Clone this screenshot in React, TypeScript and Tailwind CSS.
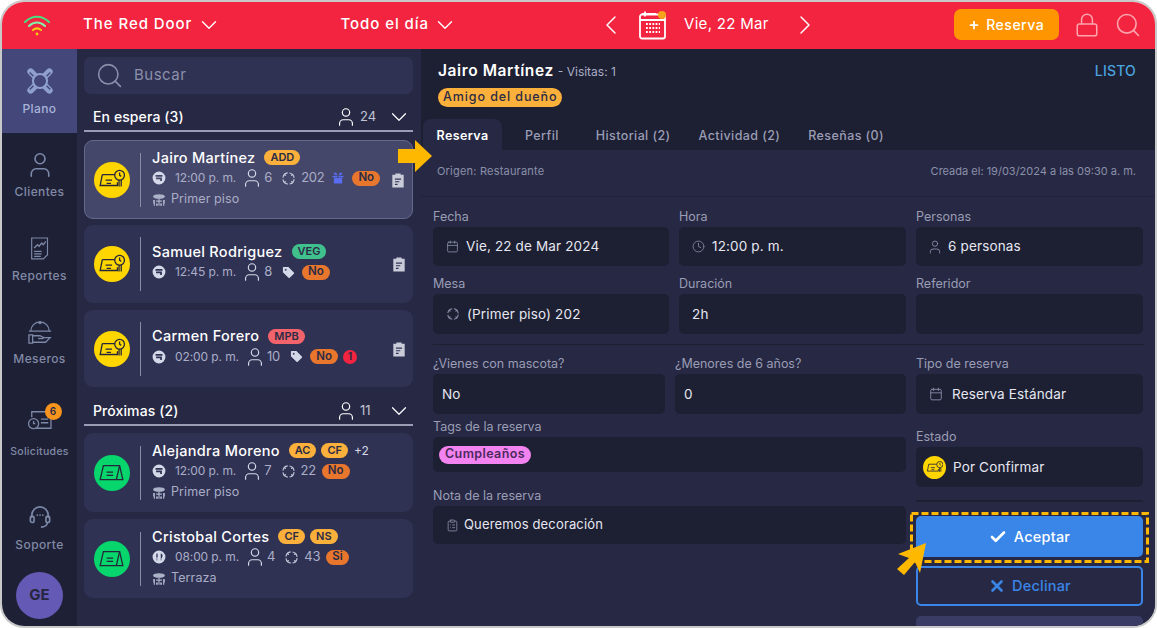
import { Calendar, Check, ChevronDown, ChevronLeft, ChevronRight, Clock, ClipboardList, Gift, Lock, Plus, Search, Tag, User, X } from "lucide-react";

const font = "font-['Inter','Liberation_Sans',sans-serif]";

function TableRound({ className = "w-5 h-5" }: { className?: string }) {
  return (
    <svg viewBox="0 0 24 24" className={className} fill="none" stroke="currentColor" strokeWidth="1.8">
      <circle cx="12" cy="12" r="9" strokeDasharray="11 3" strokeDashoffset="-1" />
      <path d="M5.500 5.500l1.500 1.500M18.500 5.500 17 7M5.500 18.500 7 17M18.500 18.500 17 17" strokeWidth="2" strokeLinecap="round" />
    </svg>
  );
}

function PlanoIcon() {
  return (
    <svg viewBox="0 0 32 32" className="w-[30px] h-[30px] text-[#8fa0d0]" fill="none" stroke="currentColor">
      <path d="M6 6l4.500 4.500M26 6l-4.500 4.500M6 26l4.500-4.500M26 26l-4.500-4.500" strokeWidth="7" strokeLinecap="round" />
      <path d="M5 7l4 4M27 7l-4 4M5 25l4-4M27 25l-4-4" strokeWidth="1.500" stroke="#44477a" />
      <circle cx="16" cy="16" r="7.500" fill="#44477a" strokeWidth="2.200" />
    </svg>
  );
}

function ReportIcon() {
  return (
    <svg viewBox="0 0 24 28" className="w-[20px] h-[24px] text-[#7c88a8]" fill="none" stroke="currentColor" strokeWidth="1.400">
      <path d="M2 2h19v20l-5 5H2z" />
      <path d="M5 14l4-4 2 2 3-4 2 2 3-4" strokeWidth="1.600" />
      <path d="M5 18h9M5 21h9M5 24h8" />
    </svg>
  );
}

function WaiterIcon() {
  return (
    <svg viewBox="0 0 28 26" className="w-[26px] h-[24px] text-[#7c88a8]" fill="none" stroke="currentColor" strokeWidth="1.400">
      <path d="M4 11a10 10 0 0 1 20 0M2 11h24" />
      <circle cx="14" cy="1.800" r="1" />
      <path d="M2 15h4v9H2zM6 16h8l4 2h7l-5 5H6" />
      <path d="M12 19h6" />
    </svg>
  );
}

function RequestIcon() {
  return (
    <svg viewBox="0 0 28 24" className="w-[26px] h-[22px] text-[#7c88a8]" fill="none" stroke="currentColor" strokeWidth="1.400">
      <path d="M5 9V3h21v18H10" />
      <circle cx="7" cy="16" r="5.500" />
      <path d="M7 13v3h2M15 11h8M15 15h8" />
    </svg>
  );
}

function HeadsetIcon() {
  return (
    <svg viewBox="0 0 24 26" className="w-[22px] h-[24px] text-[#7c88a8]" fill="none" stroke="currentColor" strokeWidth="1.800">
      <path d="M3 14v-3a9 9 0 0 1 18 0v3" />
      <rect x="1.500" y="12" width="4" height="7" rx="2" />
      <rect x="18.500" y="12" width="4" height="7" rx="2" />
      <path d="M20 19c0 3-3 5-7 5" />
      <path d="M9 11h.1M12 11h.1M15 11h.1" strokeLinecap="round" />
    </svg>
  );
}

function WifiIcon() {
  return (
    <svg viewBox="0 0 28 22" className="w-[28px] h-[22px]" fill="none" strokeLinecap="round" strokeWidth="2.200">
      <path d="M2 8c7-7 17-7 24 0" stroke="#4ade80" />
      <path d="M6 12c5-4.500 11-4.500 16 0" stroke="#86efac" />
      <path d="M10 16c2.500-2 5.500-2 8 0" stroke="#facc15" />
      <circle cx="14" cy="20" r="1.400" fill="#facc15" stroke="none" />
    </svg>
  );
}

function CalendarBadge() {
  return (
    <svg viewBox="0 0 30 30" className="w-[30px] h-[30px]" fill="none" stroke="#fff" strokeWidth="1.800">
      <rect x="2" y="4.500" width="25" height="24" rx="2" />
      <path d="M2 10h25M7 1.500v5M4 4h14" />
      <path d="M8 14h14M8 18h14M8 22h14" strokeDasharray="1.800 1.400" />
      <circle cx="24" cy="5" r="4" fill="#f7a21b" stroke="none" />
    </svg>
  );
}

function LayoutIcon() {
  return (
    <svg viewBox="0 0 24 24" className="w-[14px] h-[14px] text-[#d5d8e8] shrink-0" fill="currentColor">
      <path fillRule="evenodd" d="M12 1a11 11 0 1 0 0 22 11 11 0 0 0 0-22ZM6 7h12v3H6Zm1 4h10v6h-3v-3H7Z" />
    </svg>
  );
}

function DiningIcon() {
  return (
    <svg viewBox="0 0 24 24" className="w-[14px] h-[14px] text-[#d5d8e8] shrink-0" fill="currentColor">
      <path fillRule="evenodd" d="M12 1a11 11 0 1 0 0 22 11 11 0 0 0 0-22ZM7 6h1v4h1V6h1v5l-1 1v6H8v-6l-1-1Zm8 0c2 0 3 2 3 4s-1 4-2 4v4h-1Z" />
    </svg>
  );
}

function FloorIcon() {
  return (
    <svg viewBox="0 0 24 24" className="w-[14px] h-[14px] text-[#aab2c8] shrink-0" fill="currentColor">
      <ellipse cx="12" cy="6" rx="10" ry="4" />
      <path d="M11 9h2v13h-2zM2 12h3v10H3v-4H2zM19 12h3v6h-1v4h-2zM7 13h10v2H7zM7 18h3v4H7zM14 18h3v4h-3z" />
    </svg>
  );
}

function NoteIcon() {
  return (
    <svg viewBox="0 0 16 18" className="w-[14px] h-[16px] shrink-0">
      <path d="M5 1.500h6V3h3.500v14.500h-13V3H5z" fill="#c9ccd8" />
      <path d="M4.500 8h7M4.500 11h5M4.500 14h3" stroke="#303254" strokeWidth="1.300" />
    </svg>
  );
}

function StatusIcon({ waiting, className }: { waiting: boolean; className: string }) {
  return (
    <span className={`${className} rounded-full flex items-center justify-center shrink-0 ${waiting ? "bg-[#ffd600]" : "bg-[#06d66b]"}`}>
      <svg viewBox="0 0 26 20" className="w-[78%] h-[78%]" fill="none" stroke="#26263a" strokeWidth="1.200">
        {waiting ? (
          <>
            <path d="M4 6h13v3M4 6 2 16h16v-3" />
            <path d="M7 11h6M8 14h4" />
            <circle cx="20" cy="6.500" r="4.500" fill="#ffd600" />
            <path d="M20 4V6.500l1.500 1M19.500 11v6M21.500 11v6" />
          </>
        ) : (
          <>
            <path d="M5 4h15l3 13H2z" />
            <path d="M20 4l-3 13M8 10h6M8 13h6" />
          </>
        )}
      </svg>
    </span>
  );
}

type Pill = { label: string; color: string };

type Booking = {
  name: string;
  pills: Pill[];
  extra?: string;
  time: string;
  dining?: boolean;
  people: number;
  table?: string;
  gift?: boolean;
  tag?: boolean;
  answer: string;
  alert?: boolean;
  floor?: string;
  waiting: boolean;
  active?: boolean;
  note?: boolean;
  height: string;
};

const amber = "bg-[#fbb03b]";

const waitingList: Booking[] = [
  { name: "Jairo Martínez", pills: [{ label: "ADD", color: amber }], time: "12:00 p. m.", people: 6, table: "202", gift: true, answer: "No", floor: "Primer piso", waiting: true, active: true, note: true, height: "h-[79px]" },
  { name: "Samuel Rodriguez", pills: [{ label: "VEG", color: "bg-[#3fc08d]" }], time: "12:45 p. m.", people: 8, tag: true, answer: "No", waiting: true, note: true, height: "h-[78px]" },
  { name: "Carmen Forero", pills: [{ label: "MPB", color: "bg-[#f2636b]" }], time: "02:00 p. m.", people: 10, tag: true, answer: "No", alert: true, waiting: true, note: true, height: "h-[77px]" },
];

const upcoming: Booking[] = [
  { name: "Alejandra Moreno", pills: [{ label: "AC", color: amber }, { label: "CF", color: amber }], extra: "+2", time: "12:00 p. m.", people: 7, table: "22", answer: "No", floor: "Primer piso", waiting: false, height: "h-[79px]" },
  { name: "Cristobal Cortes", pills: [{ label: "CF", color: amber }, { label: "NS", color: amber }], time: "08:00 p. m.", dining: true, people: 4, table: "43", answer: "Si", floor: "Terraza", waiting: false, height: "h-[79px]" },
];

function BookingCard({ b }: { b: Booking }) {
  return (
    <div className={`${b.height} box-border rounded-[9px] flex items-center pr-[7px] ${b.active ? "pl-[9px] bg-[#45476a] border border-[#66698c]" : "pl-[10px] bg-[#303254]"}`}>
      <StatusIcon waiting={b.waiting} className="w-[36px] h-[36px]" />
      <div className="w-px h-[54px] bg-[#8a8ca4] ml-[10px] mr-[11px] shrink-0" />
      <div className="flex-1 flex flex-col gap-[2px] pb-[3px] min-w-0">
        <div className="flex items-center gap-[9px] h-[17px]">
          <span className="text-[14.5px] font-medium text-white whitespace-nowrap tracking-[0.3px]">{b.name}</span>
          <div className="flex items-center gap-[5px]">
            {b.pills.map((p) => (
              <span key={p.label} className={`${p.color} rounded-full px-[6px] h-[15px] flex items-center text-[11px] font-semibold text-[#2b2b45]`}>
                {p.label}
              </span>
            ))}
            {b.extra && <span className="text-[12px] text-[#d5d8e8] ml-[1px]">{b.extra}</span>}
          </div>
        </div>
        <div className="flex items-center h-[20px] text-[12px] tracking-[-0.1px] text-[#a9aec6] whitespace-nowrap">
          {b.dining ? <DiningIcon /> : <LayoutIcon />}
          <span className="ml-[9px]">{b.time}</span>
          <User className="w-[22px] h-[22px] ml-[5px] mr-[1px] text-[#d5d8e8]" strokeWidth={1.300} />
          <span className="text-[13px]">{b.people}</span>
          {b.table && (
            <>
              <TableRound className="w-[15px] h-[15px] ml-[9px] mr-[5px] text-[#c5c9dc]" />
              <span className="text-[13px] tracking-[-0.3px]">{b.table}</span>
            </>
          )}
          {b.gift && <Gift className="w-[16px] h-[16px] ml-[6px] text-[#5a6cf0]" fill="#5a6cf0" stroke="#45476a" strokeWidth={1.500} />}
          {b.tag && <Tag className="w-[15px] h-[15px] ml-[9px] text-[#d5d8e8]" fill="#d5d8e8" stroke="#303254" />}
          <span className="ml-[6px] bg-[#e8762d] rounded-full px-[6px] h-[15px] flex items-center text-[11.5px] tracking-normal font-semibold text-[#2b2b45]">{b.answer}</span>
          {b.alert && <span className="ml-[5px] w-[14px] h-[14px] rounded-full bg-[#f2243f] flex items-center justify-center text-[10px] font-bold text-[#2b2b45]">1</span>}
        </div>
        {b.floor && (
          <div className="flex items-center gap-[5px] h-[15px] mt-[2px] text-[12.5px] tracking-[0.1px] text-[#a9aec6]">
            <FloorIcon />
            {b.floor}
          </div>
        )}
      </div>
      {b.note && <NoteIcon />}
    </div>
  );
}

function SectionHeader({ title, count }: { title: string; count: number }) {
  return (
    <div className="h-[29px] border-b-2 border-[#9a9db4] flex items-center pl-[9px] pr-px text-white">
      <span className="text-[14px] font-medium flex-1 tracking-[0.1px]">{title}</span>
      <User className="w-[22px] h-[22px] text-white" strokeWidth={1.300} />
      <span className="text-[13px] text-[#c0c3d6] ml-[3px] w-[26px]">{count}</span>
      <ChevronDown className="w-[26px] h-[26px] text-white" strokeWidth={1.100} />
    </div>
  );
}

const labelClass = "text-[12px] leading-[16px] font-medium text-[#818aa6] tracking-[0.4px]";

function Sidebar() {
  return (
    <aside className="w-[75px] shrink-0 bg-[#1e2035] flex flex-col items-stretch">
      <div className="h-[84px] bg-[#44477a] flex flex-col items-center pt-[17px] gap-[5px]">
        <PlanoIcon />
        <span className="text-[12px] leading-[16px] font-medium text-[#a8b4da] tracking-[0.4px]">Plano</span>
      </div>
      <div className="h-[84px] pt-[17px] flex flex-col items-center gap-[4px]">
        <User className="w-[30px] h-[30px] text-[#7c88a8]" strokeWidth={1.300} />
        <span className={labelClass}>Clientes</span>
      </div>
      <div className="h-[84px] pt-[19px] flex flex-col items-center gap-[8px]">
        <ReportIcon />
        <span className={labelClass}>Reportes</span>
      </div>
      <div className="h-[84px] pt-[20px] flex flex-col items-center gap-[6px]">
        <WaiterIcon />
        <span className={labelClass}>Meseros</span>
      </div>
      <div className="h-[84px] pt-[24px] flex flex-col items-center gap-[13px]">
        <div className="relative">
          <RequestIcon />
          <span className="absolute -top-[6px] -right-[9px] w-[17px] h-[17px] rounded-full bg-[#f7941d] flex items-center justify-center text-[10px] font-semibold text-[#2b2b45]">6</span>
        </div>
        <span className="text-[10.5px] leading-[16px] font-medium text-[#818aa6] tracking-[0.3px]">Solicitudes</span>
      </div>
      <div className="h-[103px] pt-[36px] flex flex-col items-center gap-[8px]">
        <HeadsetIcon />
        <span className={labelClass}>Soporte</span>
      </div>
      <div className="w-[47px] h-[47px] rounded-full bg-[#6459b5] self-center flex items-center justify-center text-[15px] font-bold text-[#26263f]">GE</div>
    </aside>
  );
}

function Field({ label, children, icon, className = "", h = "h-[40px]" }: { label: string; children?: React.ReactNode; icon?: React.ReactNode; className?: string; h?: string }) {
  return (
    <div className={className}>
      <div className="text-[12.5px] text-[#9a9db4] leading-[17px] mb-[2px] whitespace-nowrap">{label}</div>
      <div className={`${h} bg-[#1d1f33] rounded-[5px] flex items-center pl-[13px] gap-[7px] text-[13.5px] tracking-[0.15px] text-[#e6e7f0]`}>
        {icon}
        {children}
      </div>
    </div>
  );
}

function Header() {
  return (
    <header className="h-[47px] shrink-0 bg-[#f2243f] pb-[2px] flex items-center text-white">
      <div className="ml-[21px]">
        <WifiIcon />
      </div>
      <span className="ml-[32px] text-[15px] font-medium tracking-[0.95px] whitespace-nowrap">The Red Door</span>
      <ChevronDown className="w-[26px] h-[26px] ml-[4px]" strokeWidth={1.300} />
      <span className="ml-[118px] text-[15px] font-medium tracking-[0.95px] whitespace-nowrap">Todo el día</span>
      <ChevronDown className="w-[26px] h-[26px] ml-[3px]" strokeWidth={1.300} />
      <ChevronLeft className="w-[32px] h-[32px] ml-[137px]" strokeWidth={1.100} />
      <div className="ml-[11px]">
        <CalendarBadge />
      </div>
      <span className="ml-[16px] text-[15px] tracking-[0.3px] whitespace-nowrap">Vie, 22 Mar</span>
      <ChevronRight className="w-[32px] h-[32px] ml-[20px]" strokeWidth={1.100} />
      <button className="ml-[133px] w-[105px] h-[31px] rounded-[7px] bg-[#ff9500] flex items-center justify-center gap-[6px] text-[14px] font-medium tracking-[0.5px]">
        <Plus className="w-[12px] h-[12px]" strokeWidth={3.500} />
        Reserva
      </button>
      <Lock className="w-[26px] h-[26px] ml-[15px] text-[#fda4af]" strokeWidth={1.400} />
      <Search className="w-[28px] h-[28px] ml-[14px] text-[#fda4af]" strokeWidth={1.400} />
    </header>
  );
}

function ListPanel() {
  return (
    <section className="w-[344px] shrink-0 bg-[#272944] pl-[7px] pr-[8px] pt-[8px] flex flex-col">
      <div className="h-[37px] rounded-[7px] bg-[#303254] flex items-center pl-[11px] gap-[10px] text-[15px] tracking-[0.5px] text-[#8b90aa] shrink-0">
        <Search className="w-[29px] h-[29px] text-[#8b90aa]" strokeWidth={1.300} />
        Buscar
      </div>
      <div className="mt-[9px]">
        <SectionHeader title="En espera (3)" count={24} />
      </div>
      <div className="mt-[8px] flex flex-col gap-[7px]">
        {waitingList.map((b, i) => (
          <div key={b.name} className={i === 1 ? "-mt-px" : ""}>
            <BookingCard b={b} />
          </div>
        ))}
      </div>
      <div className="mt-[10px]">
        <SectionHeader title="Próximas (2)" count={11} />
      </div>
      <div className="mt-[7px] flex flex-col gap-[7px]">
        {upcoming.map((b) => (
          <BookingCard key={b.name} b={b} />
        ))}
      </div>
    </section>
  );
}

function DetailPanel() {
  return (
    <section className="flex-1 min-w-0 bg-[#1d1f33] flex flex-col">
      <div className="h-[70px] shrink-0 pl-[17px] pr-[19px] pt-[11px]">
        <div className="flex items-center h-[22px]">
          <span className="text-[15.5px] font-semibold text-white tracking-[0.6px]">Jairo Martínez</span>
          <span className="text-[12px] text-[#a9aec6] ml-[4px] mt-[2px]">- Visitas: 1</span>
          <span className="ml-auto text-[14px] font-medium text-[#4aa3df] tracking-[0.2px] -mt-[2px]">LISTO</span>
        </div>
        <span className="inline-flex items-center mt-[6px] h-[19px] rounded-full bg-[#fbb03b] px-[5px] text-[12.5px] tracking-[0.9px] font-medium text-[#2b2b45]">Amigo del dueño</span>
      </div>
      <div className="h-[31px] shrink-0 flex items-stretch pl-[2px] text-[12.5px] font-medium tracking-[0.4px] text-[#9a9db4]">
        <div className="w-[79px] bg-[#272944] rounded-t-[8px] pt-[3px] flex items-center justify-center font-semibold text-white">Reserva</div>
        <div className="ml-[23px] pt-[3px] flex items-center">Perfil</div>
        <div className="ml-[37px] pt-[3px] flex items-center">Historial (2)</div>
        <div className="ml-[28px] pt-[3px] flex items-center">Actividad (2)</div>
        <div className="ml-[28px] pt-[3px] flex items-center">Reseñas (0)</div>
      </div>
      <div className="flex-1 bg-[#272944] overflow-hidden">
        <div className="h-[47px] pl-[16px] pr-[19px] flex items-center justify-between border-b border-[#222339] text-[11px] text-[#8b90aa] pb-[3px]">
          <span className="tracking-[0.2px]">Origen: Restaurante</span>
          <span>Creada el: 19/03/2024 a las 09:30 a. m.</span>
        </div>
        <div className="pl-[12px] pr-[10px] pt-[11px] flex flex-col">
          <div className="grid grid-cols-[236px_227px_227px] gap-x-[10px] gap-y-[9px]">
            <Field label="Fecha" h="h-[39px]" icon={<Calendar className="w-[13px] h-[13px] text-[#8b90aa]" strokeWidth={1.500} />}>Vie, 22 de Mar 2024</Field>
            <Field label="Hora" h="h-[39px]" icon={<Clock className="w-[13px] h-[13px] text-[#8b90aa]" strokeWidth={1.500} />}>12:00 p. m.</Field>
            <Field label="Personas" h="h-[39px]" icon={<User className="w-[16px] h-[16px] -ml-[2px] -mr-[2px] text-[#8b90aa]" strokeWidth={1.300} />}>6 personas</Field>
            <Field label="Mesa" icon={<TableRound className="w-[14px] h-[14px] text-[#8b90aa]" />}>(Primer piso) 202</Field>
            <Field label="Duración">2h</Field>
            <Field label="Referidor" />
          </div>
          <div className="h-px bg-[#1d1f33] mt-[10px]" />
          <div className="flex gap-[10px] mt-[10px]">
            <div className="w-[473px] shrink-0 flex flex-col">
              <div className="flex gap-[10px]">
                <Field label="¿Vienes con mascota?" className="w-[232px]">
                  <span className="-ml-[4px]">No</span>
                </Field>
                <Field label="¿Menores de 6 años?" className="w-[231px]">
                  <span className="-ml-[4px]">0</span>
                </Field>
              </div>
              <Field label="Tags de la reserva" className="mt-[4px]" h="h-[35px]">
                <span className="-ml-[7px] h-[18px] rounded-full bg-[#f383f0] px-[6px] flex items-center text-[12.5px] tracking-[0.4px] font-semibold text-[#4b2a5c]">Cumpleaños</span>
              </Field>
              <Field label="Nota de la reserva" className="mt-[15px]" h="h-[38px]" icon={<ClipboardList className="w-[13px] h-[13px] text-[#8b90aa]" strokeWidth={1.500} />}>
                <span className="text-[13px] -ml-[2px]">Queremos decoración</span>
              </Field>
            </div>
            <div className="w-[227px] shrink-0 flex flex-col">
              <Field label="Tipo de reserva" icon={<Calendar className="w-[14px] h-[14px] text-[#8b90aa]" strokeWidth={1.500} />}>
                <span className="ml-[2px]">Reserva Estándar</span>
              </Field>
              <Field label="Estado" className="mt-[14px]" icon={<StatusIcon waiting className="w-[23px] h-[23px] -ml-[6px]" />}>Por Confirmar</Field>
              <div className="h-[2px] bg-[#1d1f33] mt-[13px]" />
              <button className="mt-[14px] h-[41px] rounded-[5px] bg-[#3a86e8] flex items-center justify-center gap-[7px] text-[14.5px] font-medium tracking-[0.2px] text-white">
                <Check className="w-[18px] h-[18px]" strokeWidth={3.500} />
                Aceptar
              </button>
              <button className="mt-[9px] h-[40px] rounded-[5px] border-2 border-[#3a86e8] flex items-center justify-center gap-[6px] text-[14.5px] font-medium tracking-[0.2px] text-[#3a86e8]">
                <X className="w-[18px] h-[18px]" strokeWidth={3.500} />
                Declinar
              </button>
              <div className="mt-[10px] h-[20px] rounded-t-[5px] bg-[#3a3c66]" />
            </div>
          </div>
        </div>
      </div>
    </section>
  );
}

export default function App() {
  return (
    <div className={`${font} relative w-[1157px] h-[628px] overflow-hidden bg-white`}>
      <div className="w-full h-full box-border border-2 border-[#c9c9c9] rounded-[24px] overflow-hidden flex flex-col">
        <Header />
        <div className="flex-1 min-h-0 flex">
          <Sidebar />
          <ListPanel />
          <DetailPanel />
        </div>
      </div>
      {/* tutorial marks */}
      <svg viewBox="0 0 239 51" className="absolute left-[910px] top-[512px] w-[239px] h-[51px]" fill="none">
        <rect x="1.500" y="1.500" width="236" height="48" stroke="#ffb800" strokeWidth="3" strokeDasharray="7 3" />
      </svg>
      <svg viewBox="0 0 34 32" className="absolute left-[398px] top-[140px] w-[34px] h-[32px]">
        <path d="M0 9h17V0l17 16-17 16v-9H0z" fill="#ffb800" />
      </svg>
      <svg viewBox="0 0 30 32" className="absolute left-[897px] top-[543px] w-[30px] h-[32px]">
        <path d="M29 0 23 30l-5-11-11 13-7-6 12-11L1 11z" fill="#ffb800" />
      </svg>
    </div>
  );
}
